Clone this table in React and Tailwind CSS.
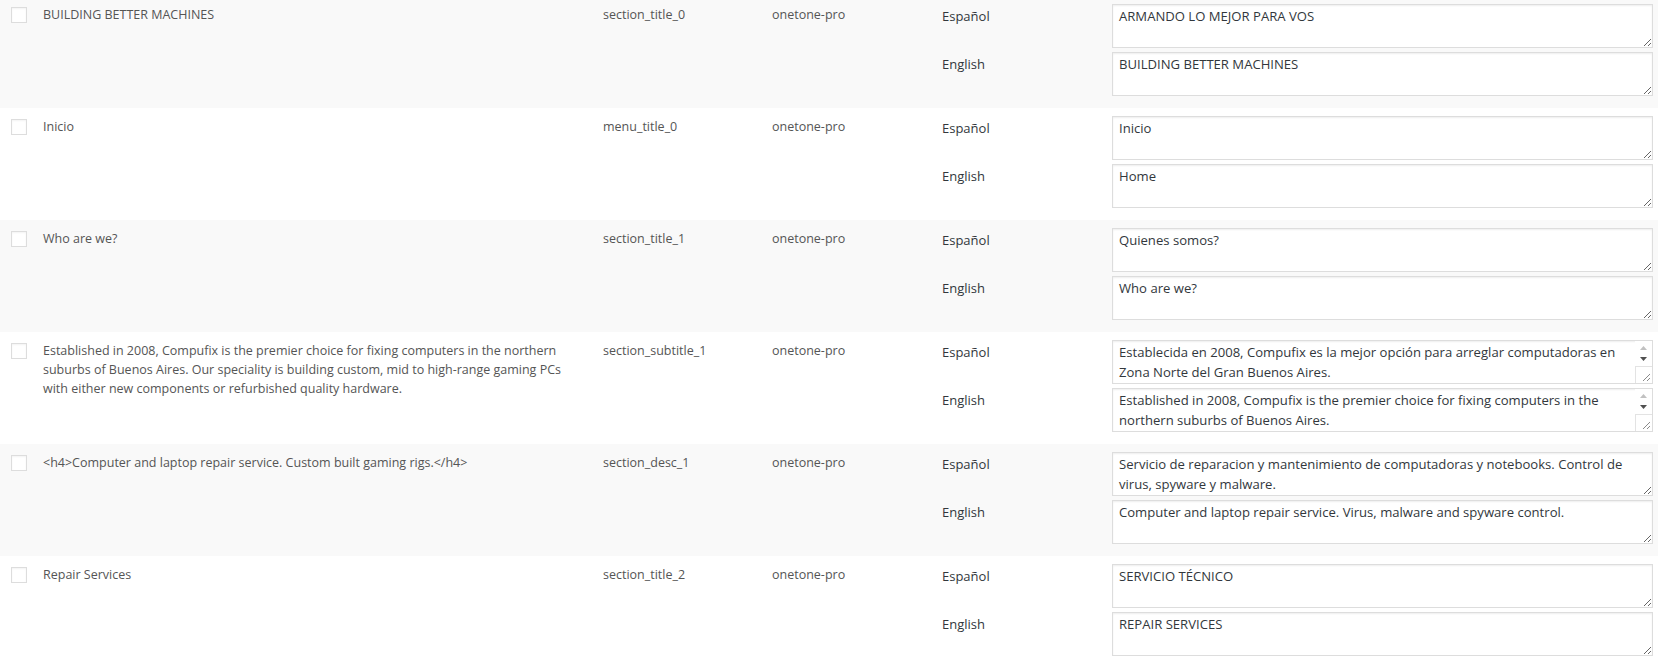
import React from 'react';

const rows = [
  {
    text: 'BUILDING BETTER MACHINES',
    name: 'section_title_0',
    es: 'ARMANDO LO MEJOR PARA VOS',
    en: 'BUILDING BETTER MACHINES',
  },
  { text: 'Inicio', name: 'menu_title_0', es: 'Inicio', en: 'Home' },
  { text: 'Who are we?', name: 'section_title_1', es: 'Quienes somos?', en: 'Who are we?' },
  {
    text: 'Established in 2008, Compufix is the premier choice for fixing computers in the northern suburbs of Buenos Aires. Our speciality is building custom, mid to high-range gaming PCs with either new components or refurbished quality hardware.',
    name: 'section_subtitle_1',
    es: 'Establecida en 2008, Compufix es la mejor opción para arreglar computadoras en Zona Norte del Gran Buenos Aires.',
    en: 'Established in 2008, Compufix is the premier choice for fixing computers in the northern suburbs of Buenos Aires.',
    scroll: true,
  },
  {
    text: '<h4>Computer and laptop repair service. Custom built gaming rigs.</h4>',
    name: 'section_desc_1',
    es: 'Servicio de reparacion y mantenimiento de computadoras y notebooks. Control de virus, spyware y malware.',
    en: 'Computer and laptop repair service. Virus, malware and spyware control.',
  },
  { text: 'Repair Services', name: 'section_title_2', es: 'SERVICIO TÉCNICO', en: 'REPAIR SERVICES' },
];

function FakeScrollbar() {
  return (
    <div className="absolute right-[1px] top-[1px] bottom-[1px] w-[17px] bg-white flex flex-col pointer-events-none">
      <div className="h-[12px] flex items-center justify-center pt-[2px]">
        <svg width="7" height="4" viewBox="0 0 7 4">
          <path d="M0 4 L3.5 0 L7 4 Z" fill="#c1c1c1" />
        </svg>
      </div>
      <div className="h-[12px] flex items-center justify-center">
        <svg width="7" height="4" viewBox="0 0 7 4">
          <path d="M0 0 L7 0 L3.5 4 Z" fill="#505050" />
        </svg>
      </div>
      <div className="flex-1" />
      <div className="h-[17px] border-t border-l border-[#e3e3e3] bg-white flex items-end justify-end p-[2px]">
        <svg width="8" height="8" viewBox="0 0 8 8">
          <path d="M1 8 L8 1 M5 8 L8 5" stroke="#8a8a8a" strokeWidth="1" />
        </svg>
      </div>
    </div>
  );
}

function Field({ value, scroll }) {
  return (
    <div className="relative w-[541px] h-[44px]">
      <textarea
        readOnly
        defaultValue={value}
        className={
          'block w-[541px] h-[44px] border border-[#dddddd] bg-white pt-[2px] pb-[3px] pl-[6px] text-[13.1px] leading-[19.5px] text-[#32373c] overflow-hidden resize-y shadow-[inset_0_1px_2px_rgba(0,0,0,0.07)] outline-none ' +
          (scroll ? 'pr-[24px]' : 'pr-[6px]')
        }
      />
      {scroll && <FakeScrollbar />}
    </div>
  );
}

function Row({ row, odd }) {
  return (
    <div className={'flex h-[112px] text-[12.5px] leading-[19px] text-[#555]' + (odd ? ' bg-[#f9f9f9]' : ' bg-white')}>
      <div className="w-[43px] shrink-0 pl-[11px] pt-[11px]">
        <div className="w-[16px] h-[16px] border border-[#dddddd] bg-white shadow-[inset_0_1px_2px_rgba(0,0,0,0.05)]" />
      </div>
      <div className="w-[560px] shrink-0 pt-[9px]">
        <p className="w-[525px]">{row.text}</p>
      </div>
      <div className="w-[169px] shrink-0 pt-[9px]">{row.name}</div>
      <div className="w-[170px] shrink-0 pt-[9px]">onetone-pro</div>
      <div className="flex flex-col gap-[4px] pt-[8px]">
        {[
          ['Español', row.es],
          ['English', row.en],
        ].map(([lang, value]) => (
          <div key={lang} className="flex">
            <div className="w-[170px] shrink-0 pt-[3px] text-[13px] leading-[19.5px] text-[#32373c]">{lang}</div>
            <Field value={value} scroll={row.scroll} />
          </div>
        ))}
      </div>
    </div>
  );
}

export default function App() {
  return (
    <div
      className="w-[1658px] h-[662px] overflow-hidden bg-white"
      style={{ fontFamily: '"Open Sans", "Noto Sans", sans-serif' }}
    >
      <div className="-mt-[4px]">
        {rows.map((row, i) => (
          <Row key={i} row={row} odd={i % 2 === 0} />
        ))}
      </div>
    </div>
  );
}
